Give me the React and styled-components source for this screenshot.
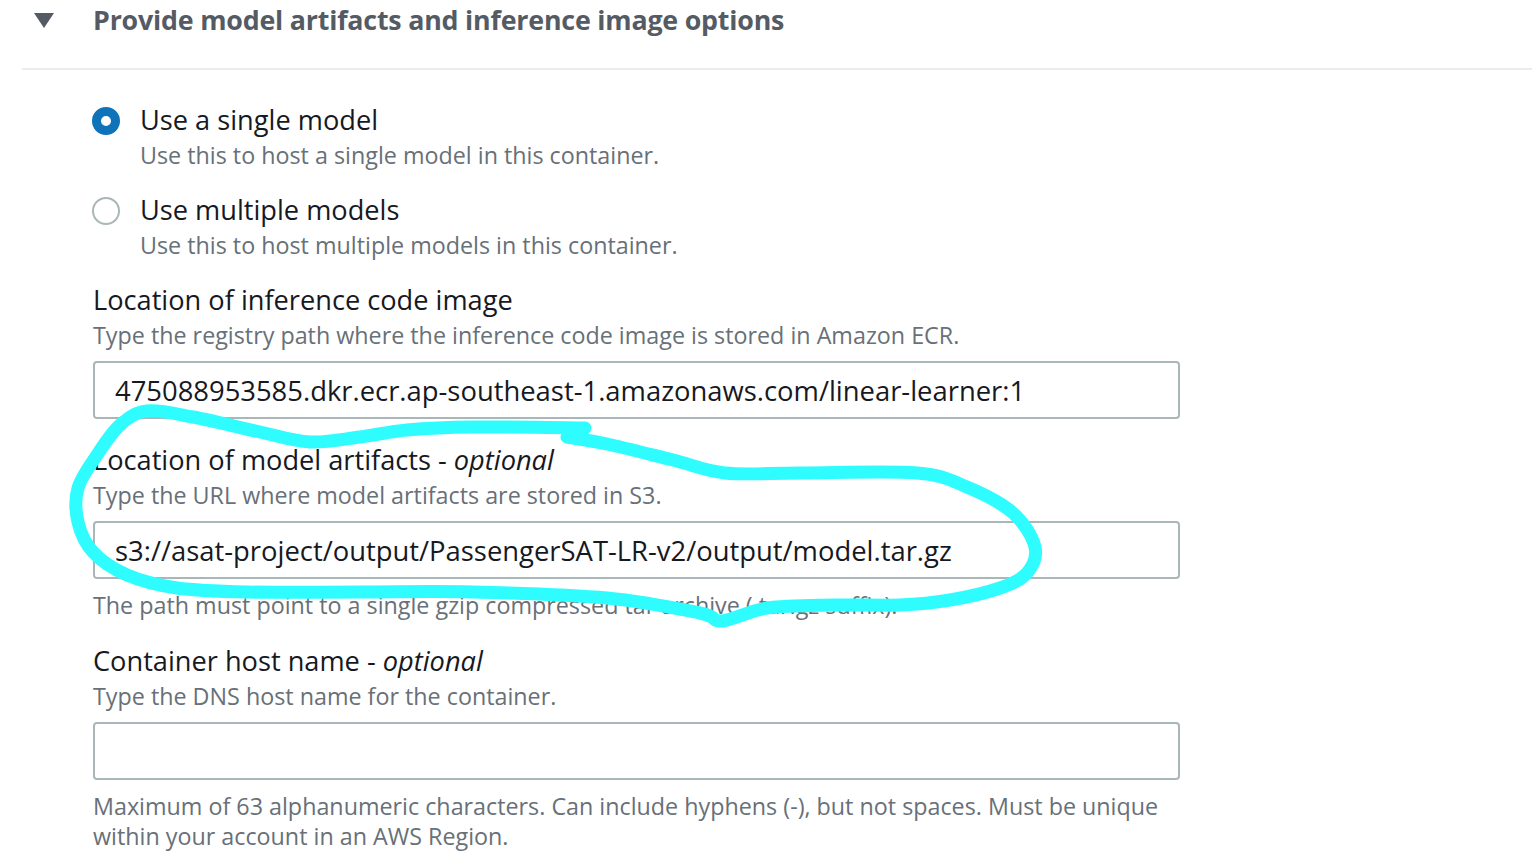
import React from "react";
import styled, { createGlobalStyle } from "styled-components";

const GlobalStyle = createGlobalStyle`
  html, body { margin: 0; padding: 0; background: #ffffff; }
  body { font-family: "Open Sans", "Noto Sans", Arial, sans-serif; }
  * { box-sizing: border-box; }
`;

const Page = styled.div`
  position: relative;
  width: 1532px;
  height: 862px;
  overflow: hidden;
  background: #fff;
`;

const Header = styled.div`
  display: flex;
  align-items: center;
  height: 40px;
  padding-left: 34px;
  gap: 39px;
`;

const Caret = styled.span`
  width: 0;
  height: 0;
  border-left: 10px solid transparent;
  border-right: 10px solid transparent;
  border-top: 15px solid #545b64;
  margin-top: 1px;
`;

const Title = styled.h2`
  margin: 0;
  font-size: 26.8px;
  line-height: 40px;
  font-weight: 700;
  color: #545b64;
  letter-spacing: -0.2px;
`;

const Divider = styled.div`
  margin: 28px 0 0 22px;
  height: 2px;
  background: #eaeded;
`;

const Body = styled.div`
  display: flex;
  flex-direction: column;
  gap: 23px;
  padding: 33px 0 0 92px;
  width: 1180px;
`;

const Option = styled.label`
  display: grid;
  grid-template-columns: 28px 1fr;
  column-gap: 20px;
  row-gap: 3px;
  align-items: center;
`;

const Radio = styled.span`
  width: 28px;
  height: 28px;
  border-radius: 50%;
  box-sizing: border-box;
  border: ${(p) => (p.$checked ? "9px solid #0f73ba" : "2px solid #aab7b8")};
  background: #fff;
  margin-top: 1px;
`;

const Label = styled.div`
  font-size: 27.2px;
  line-height: 34px;
  color: #16191f;
`;

const Desc = styled.div`
  font-size: 23.3px;
  line-height: 30px;
  color: #687078;
  grid-column: ${(p) => (p.$indent ? "2" : "auto")};
`;

const Field = styled.div`
  display: flex;
  flex-direction: column;
  padding-left: 1px;

  & + & {
    margin-top: 1px;
  }
`;

const LabelDesc = styled.div`
  display: flex;
  flex-direction: column;
  gap: 3px;
  margin-bottom: 11px;
`;

const Input = styled.div`
  width: 1087px;
  height: 58px;
  border: 2px solid #aab7b8;
  border-radius: 4px;
  padding-left: 20px;
  display: flex;
  align-items: center;
  font-size: 27.4px;
  color: #16191f;
  white-space: nowrap;
`;

const Constraint = styled.div`
  margin-top: 11px;
  width: 1087px;
  font-size: 23.3px;
  line-height: 30px;
  color: #687078;
`;

const Optional = styled.em`
  font-style: italic;
`;

const Overlay = styled.svg`
  position: absolute;
  left: 0;
  top: 0;
  pointer-events: none;
`;

const points = [
  [567, 437], [607, 444], [673, 460], [725, 473], [800, 473], [917, 473],
  [967, 487], [1013, 513], [1035, 547], [1027, 573], [1000, 588], [950, 600],
  [900, 605], [833, 605], [767, 608], [722, 621], [700, 613], [607, 598],
  [473, 592], [360, 592], [247, 592], [177, 588], [127, 575], [93, 552],
  [78, 522], [78, 488], [97, 455], [120, 425], [147, 411], [193, 417],
  [260, 432], [310, 442], [360, 437], [407, 430], [473, 427], [585, 428],
];

function smoothPath(pts) {
  let d = `M ${pts[0][0]} ${pts[0][1]}`;
  for (let i = 0; i < pts.length - 1; i++) {
    const p0 = pts[i - 1] || pts[i];
    const p1 = pts[i];
    const p2 = pts[i + 1];
    const p3 = pts[i + 2] || p2;
    const c1x = p1[0] + (p2[0] - p0[0]) / 6;
    const c1y = p1[1] + (p2[1] - p0[1]) / 6;
    const c2x = p2[0] - (p3[0] - p1[0]) / 6;
    const c2y = p2[1] - (p3[1] - p1[1]) / 6;
    d += ` C ${c1x.toFixed(1)} ${c1y.toFixed(1)} ${c2x.toFixed(1)} ${c2y.toFixed(1)} ${p2[0]} ${p2[1]}`;
  }
  return d;
}

function FormField({ label, optional, desc, value, constraint }) {
  return (
    <Field>
      <LabelDesc>
        <Label>
          {label}
          {optional && (
            <>
              {" - "}
              <Optional>optional</Optional>
            </>
          )}
        </Label>
        <Desc>{desc}</Desc>
      </LabelDesc>
      <Input>{value}</Input>
      {constraint && <Constraint>{constraint}</Constraint>}
    </Field>
  );
}

export default function App() {
  return (
    <Page>
      <GlobalStyle />
      <Header>
        <Caret />
        <Title>Provide model artifacts and inference image options</Title>
      </Header>
      <Divider />
      <Body>
        <Option>
          <Radio $checked />
          <Label>Use a single model</Label>
          <Desc $indent>Use this to host a single model in this container.</Desc>
        </Option>
        <Option>
          <Radio />
          <Label>Use multiple models</Label>
          <Desc $indent>Use this to host multiple models in this container.</Desc>
        </Option>
        <FormField
          label="Location of inference code image"
          desc="Type the registry path where the inference code image is stored in Amazon ECR."
          value="475088953585.dkr.ecr.ap-southeast-1.amazonaws.com/linear-learner:1"
        />
        <FormField
          label="Location of model artifacts"
          optional
          desc="Type the URL where model artifacts are stored in S3."
          value="s3://asat-project/output/PassengerSAT-LR-v2/output/model.tar.gz"
          constraint="The path must point to a single gzip compressed tar archive (.tar.gz suffix)."
        />
        <FormField
          label="Container host name"
          optional
          desc="Type the DNS host name for the container."
          value=""
          constraint="Maximum of 63 alphanumeric characters. Can include hyphens (-), but not spaces. Must be unique within your account in an AWS Region."
        />
      </Body>
      <Overlay width="1532" height="862" viewBox="0 0 1532 862">
        <path
          d={smoothPath(points)}
          fill="none"
          stroke="#2efcff"
          strokeWidth="13"
          strokeLinecap="round"
          strokeLinejoin="round"
        />
      </Overlay>
    </Page>
  );
}
